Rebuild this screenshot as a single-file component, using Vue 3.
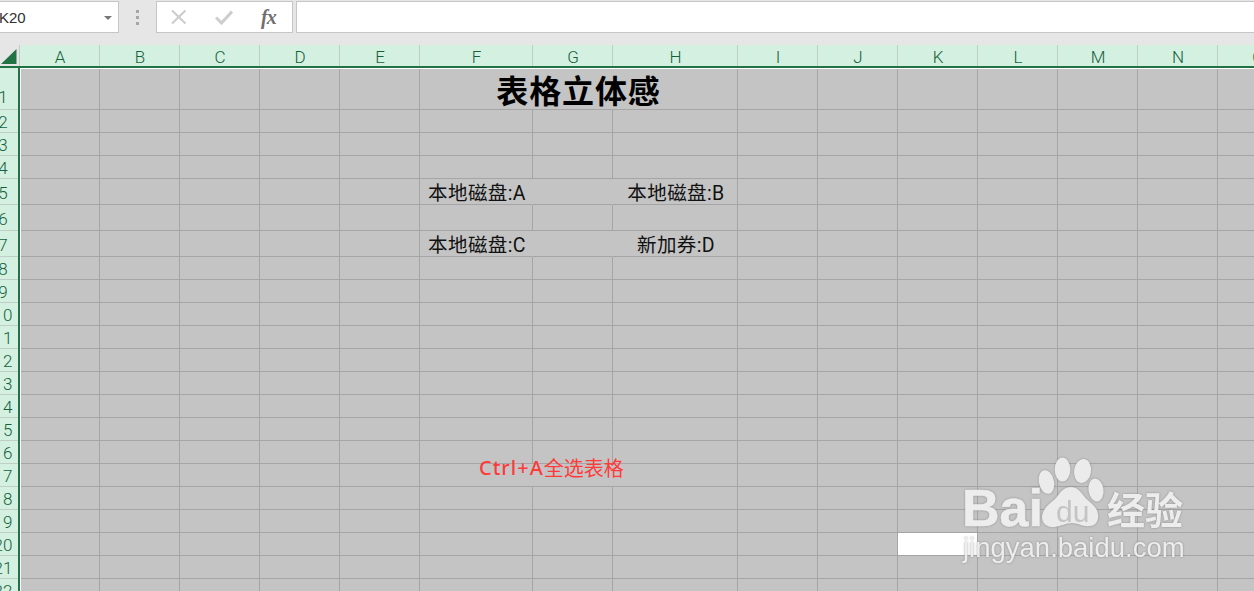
<script setup>
const colNames = ['A','B','C','D','E','F','G','H','I','J','K','L','M','N','O']
const colWidths = ['w80','w80','w80','w80','w80','w113','w80','w125','w80','w80','w80','w80','w80','w80','w80']
const rowHeights = [42,23,23,23,26,26,26]
const rows = Array.from({ length: 22 }, (_, i) => ({ n: i + 1, h: rowHeights[i] || 23 }))

const special = {
  '1-5': { text: '表格立体感', span: 3, cls: 'title' },
  '5-5': { text: '本地磁盘:A', cls: 'disk open' },
  '5-6': { cls: 'open' },
  '5-7': { text: '本地磁盘:B', cls: 'disk' },
  '7-5': { text: '本地磁盘:C', cls: 'disk open' },
  '7-6': { cls: 'open' },
  '7-7': { text: '新加券:D', cls: 'disk' },
  '17-5': { lead: 'Ctrl+A', text: '全选表格', span: 3, cls: 'hint' },
  '20-10': { cls: 'blank' }
}
const cells = []
rows.forEach(r => {
  let c = 0
  while (c < colNames.length) {
    const s = special[r.n + '-' + c] || {}
    cells.push({ key: r.n + '-' + c, lead: s.lead || '', text: s.text || '', cls: s.cls || '', span: s.span || 1 })
    c += s.span || 1
  }
})
</script>

<template>
  <div class="app">
    <div class="toolbar">
      <div class="namebox">
        <span class="cellref">K20</span>
        <span class="caret"></span>
      </div>
      <div class="grip"><i></i><i></i><i></i></div>
      <div class="fxbox">
        <svg class="ico" width="17" height="16" viewBox="0 0 17 16"><path d="M2 1.500 15.500 14.500M15.500 1.500 2 14.500" stroke="#cdcdcd" stroke-width="2.200" fill="none"/></svg>
        <svg class="ico" width="18" height="16" viewBox="0 0 18 16"><path d="M1 8.500 6.500 14 17 2.500" stroke="#cdcdcd" stroke-width="3" fill="none"/></svg>
        <span class="fx">fx</span>
      </div>
      <div class="formula"></div>
    </div>

    <div class="colhead">
      <div class="corner">
        <svg width="19" height="21" viewBox="0 0 19 21"><path d="M1 19H16.500V4Z" fill="#217346"/></svg>
      </div>
      <div v-for="(c, i) in colNames" :key="c" class="collabel" :class="colWidths[i]">{{ c }}</div>
    </div>

    <div class="body">
      <div class="rowhead">
        <div v-for="r in rows" :key="r.n" class="rowlabel" :class="'h' + r.h"><span>{{ r.n }}</span></div>
      </div>
      <div class="cells">
        <div
          v-for="cell in cells"
          :key="cell.key"
          class="cell"
          :class="[cell.cls, cell.span === 3 ? 'span3' : '']"
        ><span v-if="cell.lead" class="lead">{{ cell.lead }}</span>{{ cell.text }}</div>
      </div>
    </div>

    <div class="watermark">
      <svg class="paw" width="90" height="76" viewBox="0 0 90 76">
        <ellipse cx="8.500" cy="26" rx="7.500" ry="12" transform="rotate(-12 8.500 26)"/>
        <ellipse cx="24.500" cy="13.500" rx="7.800" ry="12"/>
        <ellipse cx="44.500" cy="15" rx="8.500" ry="12" transform="rotate(8 44.500 15)"/>
        <ellipse cx="58" cy="34" rx="7.500" ry="11.500" transform="rotate(-8 58 34)"/>
        <path d="M33 31C25 31 22 37 18 42C13 47 5 51 4 61C4 68 10 72 17 71C23 70 28 67 34 67C40 67 45 71 52 70C58 70 61 64 60 58C59 49 50 46 46 40C42 35 39 31 33 31Z"/>
        <text x="18" y="66" class="pawtext">du</text>
      </svg>
      <div class="logo">
        <span class="bai">Bai</span>
        <span class="jy">经验</span>
      </div>
      <div class="url">jingyan.baidu.com</div>
    </div>
  </div>
</template>

<style scoped>
.app {
  position: relative;
  width: 1254px;
  height: 591px;
  overflow: hidden;
  background: #e6e6e6;
  font-family: "Roboto", "Noto Sans CJK SC", sans-serif;
}
.toolbar {
  height: 45px;
  box-sizing: border-box;
  padding-top: 1px;
  display: flex;
  align-items: flex-start;
  background: #e6e6e6;
}
.namebox, .fxbox, .formula {
  height: 32px;
  box-sizing: border-box;
  background: #fff;
  border: 1px solid #c6c6c6;
  display: flex;
  align-items: center;
}
.namebox {
  width: 119px;
  border-left: 0;
  justify-content: space-between;
  padding-right: 6px;
}
.cellref {
  font-family: "Liberation Sans", sans-serif;
  font-size: 15px;
  color: #303030;
  margin-left: -1px;
}
.caret {
  width: 0;
  height: 0;
  border-left: 4px solid transparent;
  border-right: 4px solid transparent;
  border-top: 4px solid #777;
  margin-top: 2px;
}
.grip {
  width: 37px;
  display: flex;
  flex-direction: column;
  align-items: center;
  gap: 3px;
  padding-top: 9px;
}
.grip i {
  width: 3px;
  height: 3px;
  background: #a6a6a6;
}
.fxbox {
  width: 137px;
  padding-left: 13px;
}
.ico { flex: none; margin-right: 28px; }
.ico + .ico { margin-right: 28px; }
.fx {
  font-family: "Liberation Serif", serif;
  font-style: italic;
  font-weight: 700;
  font-size: 20px;
  color: #707070;
  letter-spacing: -1px;
}
.formula {
  flex: 1;
  margin-left: 3px;
  border-right: 0;
}
.colhead {
  display: flex;
  height: 23px;
  box-sizing: border-box;
  border-bottom: 2px solid #217346;
  background: #d3f0e0;
}
.corner {
  width: 20px;
  flex: none;
  box-sizing: border-box;
  background: #e6e6e6;
  border-right: 1px solid #c8c8c8;
}
.corner svg { display: block; }
.collabel {
  flex: none;
  box-sizing: border-box;
  border-right: 1px solid #bfcfc6;
  padding-left: 1px;
  color: #14613a;
  font-size: 17px;
  font-weight: 300;
  line-height: 25px;
  text-align: center;
}
.w80 { width: 80px; }
.w113 { width: 113px; }
.w125 { width: 125px; }
.body {
  display: flex;
  align-items: flex-start;
}
.rowhead {
  width: 20px;
  flex: none;
  box-sizing: border-box;
  border-right: 2px solid #217346;
  background: #d3f0e0;
  overflow: hidden;
  height: 523px;
}
.rowlabel {
  box-sizing: border-box;
  border-bottom: 1px solid #bfcfc6;
  padding-right: 12px;
  display: flex;
  justify-content: center;
  align-items: flex-end;
  color: #14613a;
  font-size: 17px;
  font-weight: 300;
  line-height: 19px;
  white-space: nowrap;
}
.h42 { height: 42px; padding-bottom: 2px; }
.h23 { height: 23px; }
.h26 { height: 26px; padding-bottom: 1px; }
.cells {
  flex: none;
  display: grid;
  grid-template-columns: 79px repeat(4, 80px) 113px 80px 125px repeat(7, 80px);
  grid-template-rows: 41px repeat(3, 23px) repeat(3, 26px) repeat(15, 23px);
  border-top: 1px solid #fff;
  border-left: 1px solid #fff;
  background: #c4c4c4;
}
.cell {
  box-sizing: border-box;
  border-right: 1px solid #a5a5a5;
  border-bottom: 1px solid #a5a5a5;
  color: #000;
  white-space: nowrap;
  min-width: 0;
}
.span3 { grid-column: span 3; }
.open { border-right-color: transparent; }
.blank { background: #fff; }
.disk {
  display: flex;
  align-items: center;
  justify-content: center;
  padding-left: 2px;
  font-family: "Roboto", "Noto Sans CJK SC", sans-serif;
  font-size: 19.500px;
  font-weight: 400;
  letter-spacing: .4px;
  color: #111;
}
.title {
  display: flex;
  align-items: center;
  justify-content: center;
  font-family: "Liberation Sans", "Noto Sans CJK SC", sans-serif;
  font-size: 32px;
  font-weight: 700;
  letter-spacing: .9px;
}
.hint {
  display: flex;
  align-items: center;
  padding-left: 59px;
  padding-bottom: 15px;
  font-family: "Noto Sans", "Noto Sans CJK SC", sans-serif;
  font-size: 20px;
  color: #ff3a3a;
}
.lead {
  letter-spacing: 1px;
  font-weight: 500;
}
.watermark {
  position: absolute;
  left: 962px;
  top: 486px;
  width: 226px;
  color: #ededed;
  filter: drop-shadow(0 0 1px rgba(100, 100, 100, .55));
}
.paw {
  position: absolute;
  left: 76px;
  top: -30px;
  fill: #ebebeb;
}
.pawtext {
  font-family: "Liberation Sans", sans-serif;
  font-size: 30px;
  fill: #c4c4c4;
}
.logo {
  display: flex;
  justify-content: space-between;
  align-items: center;
  height: 44px;
}
.bai {
  font-family: "Liberation Sans", sans-serif;
  font-weight: 700;
  font-size: 52px;
  line-height: 44px;
  -webkit-text-stroke: .6px #ededed;
}
.jy {
  font-family: "Noto Sans CJK SC", sans-serif;
  font-weight: 700;
  font-size: 38px;
  line-height: 44px;
  margin-right: 5px;
}
.url {
  font-family: "Liberation Sans", sans-serif;
  font-size: 27.500px;
  line-height: 30px;
  margin-top: 3px;
  margin-left: 1px;
  white-space: nowrap;
}
</style>
